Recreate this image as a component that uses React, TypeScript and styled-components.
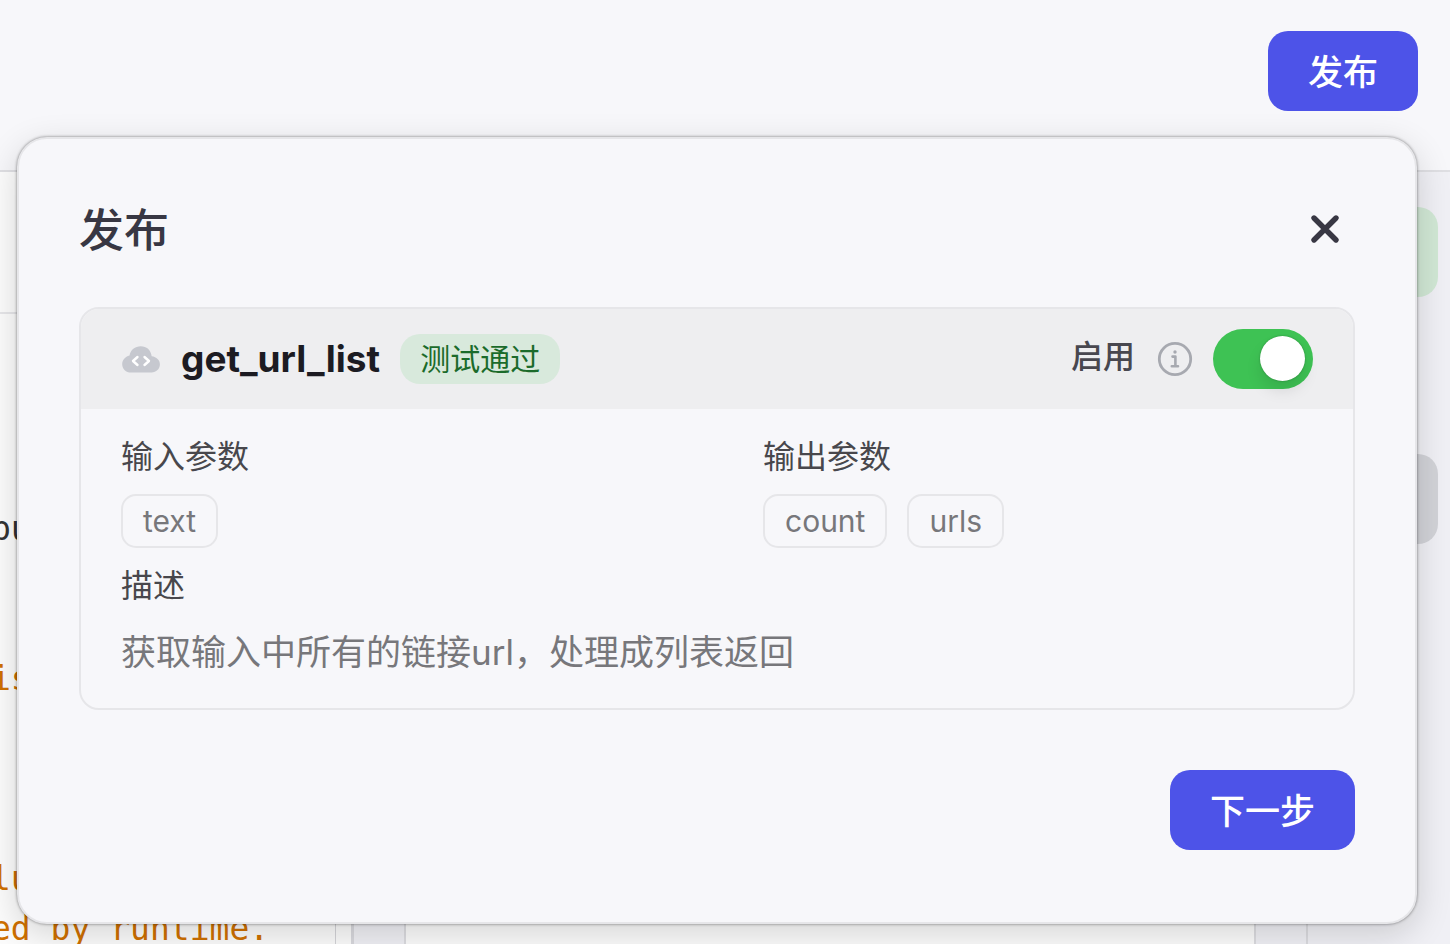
import React from "react";
import styled, { createGlobalStyle } from "styled-components";

const GlobalStyle = createGlobalStyle`
  *, *::before, *::after { box-sizing: border-box; }
  body {
    margin: 0;
    background: #f7f7fa;
    color: #1c1b22;
    font-family: Inter, "Noto Sans CJK SC", sans-serif;
  }
  h2, h3, h4, p, ul, pre { margin: 0; padding: 0; }
  button { font-family: inherit; }
`;

const Page = styled.div`
  position: relative;
  display: flex;
  flex-direction: column;
  height: 100vh;
  overflow: hidden;
`;

const TopBar = styled.header`
  display: flex;
  flex: none;
  justify-content: flex-end;
  align-items: flex-start;
  height: 172px;
  padding: 31px 32px;
  border-bottom: 2px solid #dfdfe3;
`;

const PrimaryButton = styled.button`
  height: 80px;
  padding: 2px 40px 0;
  border: 0;
  border-radius: 20px;
  background: #4d53e8;
  color: #fff;
  font-size: 35px;
  font-weight: 500;
  line-height: 50px;
  cursor: pointer;
`;

const Workspace = styled.main`
  display: flex;
  flex: 1;
  min-height: 0;
  background: #f0f0f5;
`;

const Editor = styled.section`
  flex: none;
  width: 336px;
  overflow: hidden;
  border-right: 1px solid #d4d4d8;
  background: #fcfcfc;
`;

const EditorHead = styled.div`
  height: 142px;
  border-bottom: 2px solid #e6e6e9;
`;

const CodeLines = styled.div`
  margin-left: -9px;
  padding-top: 40px;
`;

const CodeLine = styled.pre<{ $comment?: boolean }>`
  height: 50px;
  color: ${(p) => (p.$comment ? "#cf7000" : "#333")};
  font-family: "DejaVu Sans Mono", monospace;
  font-size: 33px;
  line-height: 50px;
`;

const EditorRail = styled.div`
  flex: none;
  width: 18px;
  border-right: 3px solid #d9d9de;
  background: #fcfcfc;
`;

const Canvas = styled.section`
  flex: 1;
  margin: 0 50px;
  border: solid #dcdce0;
  border-width: 0 2px;
  background: #fcfcfc;
`;

const SidePanel = styled.aside`
  display: flex;
  flex: none;
  flex-direction: column;
  gap: 157px;
  width: 144px;
  padding: 35px 12px;
  border-left: 2px solid #dcdce0;
`;

const StatusBlock = styled.div<{ $color: string }>`
  height: 90px;
  border-radius: 20px;
  background: ${(p) => p.$color};
`;

const Popover = styled.section`
  position: absolute;
  top: 137px;
  right: 33px;
  left: 17px;
  padding: 60px 60px 72px;
  border: 2px solid #e6e6e9;
  border-radius: 30px;
  background: #f7f7fa;
  box-shadow: 0 0 3px rgba(0, 0, 0, 0.5), 0 10px 35px rgba(0, 0, 0, 0.16);
`;

const PopoverHead = styled.div`
  display: flex;
  justify-content: space-between;
  align-items: center;
  height: 60px;
  margin-bottom: 48px;
`;

const Title = styled.h2`
  padding-top: 4px;
  color: #383743;
  font-size: 45px;
  font-weight: 500;
  line-height: 60px;
`;

const CloseButton = styled.button`
  display: flex;
  justify-content: center;
  align-items: center;
  width: 60px;
  height: 60px;
  padding: 0;
  border: 0;
  background: none;
  color: #383743;
  cursor: pointer;
`;

const Card = styled.article`
  overflow: hidden;
  border: 2px solid #e6e6e9;
  border-radius: 20px;
`;

const CardHead = styled.header`
  display: flex;
  justify-content: space-between;
  align-items: center;
  height: 100px;
  padding: 0 40px;
  background: #eeeef0;
`;

const HeadGroup = styled.div`
  display: flex;
  align-items: center;
  gap: 20px;
`;

const Name = styled.h3`
  font-size: 37px;
  font-weight: 700;
  line-height: 50px;
`;

const StatusTag = styled.span`
  padding: 0 20px;
  border-radius: 20px;
  background: #d8e9dc;
  color: #1b6b2b;
  font-size: 30px;
  line-height: 50px;
`;

const SwitchLabel = styled.label`
  padding: 0 2px 4px 0;
  color: #48474f;
  font-size: 32px;
  font-weight: 500;
  line-height: 50px;
`;

const Switch = styled.input`
  display: flex;
  align-items: center;
  justify-content: flex-start;
  appearance: none;
  width: 100px;
  height: 60px;
  margin: 0;
  padding: 0 8px 2px;
  border-radius: 30px;
  background: #c6c8cf;
  cursor: pointer;

  &::before {
    content: "";
    width: 45px;
    height: 45px;
    border-radius: 50%;
    background: #fff;
    box-shadow: 0 0 2px rgba(0, 0, 0, 0.3), 0 10px 15px rgba(0, 0, 0, 0.1);
  }

  &:checked {
    justify-content: flex-end;
    background: #3ec254;
  }
`;

const CardBody = styled.div`
  display: grid;
  grid-template-columns: 1fr 1fr;
  column-gap: 92px;
  row-gap: 15px;
  padding: 25px 40px 27px;
`;

const Field = styled.div<{ $wide?: boolean }>`
  grid-column: ${(p) => (p.$wide ? "1 / -1" : "auto")};
`;

const FieldLabel = styled.h4`
  margin-bottom: 14px;
  color: #48474c;
  font-size: 32px;
  font-weight: 400;
  line-height: 46px;
`;

const Chips = styled.ul`
  display: flex;
  gap: 20px;
  list-style: none;
`;

const Chip = styled.li`
  padding: 0 20px;
  border: 2px solid #e6e6e9;
  border-radius: 15px;
  color: #77777b;
  font-size: 30px;
  line-height: 50px;
`;

const Description = styled.p`
  padding: 4px 0;
  color: #77777b;
  font-size: 35px;
  line-height: 50px;
`;

const PopoverFoot = styled.footer`
  display: flex;
  justify-content: flex-end;
  margin-top: 60px;
`;

const CloseIcon = () => (
  <svg width="30" height="30" viewBox="0 0 30 30" fill="none" stroke="currentColor" strokeWidth="5.400" strokeLinecap="round" aria-hidden="true">
    <path d="M4 4 26 26M26 4 4 26" />
  </svg>
);

const CloudCodeIcon = () => (
  <svg width="40" height="40" viewBox="0 0 40 40" aria-hidden="true">
    <path
      d="M10 33.5C5 33.5 1.200 30 1.200 25.200C1.200 21 4.200 17.700 8.500 16.500C9.500 11 14 7.300 19.800 7.300C25.500 7.300 29.800 10.800 30.700 17.200C35.500 17.800 38.900 21 38.900 25.300C38.900 30 35.300 33.500 30.500 33.500Z"
      fill="#c6c8cf"
    />
    <path d="M16.500 18 12 22 16.500 26M23.500 18 28 22 23.500 26" fill="none" stroke="#fff" strokeWidth="2.400" strokeLinecap="round" strokeLinejoin="round" />
  </svg>
);

const InfoIcon = () => (
  <svg width="36" height="36" viewBox="0 0 36 36" fill="none" stroke="#a7a9b0" aria-hidden="true">
    <circle cx="18" cy="18" r="15.700" strokeWidth="2.800" />
    <path d="M15.500 15.600H18.400V25M14.800 25.200H21" strokeWidth="2.600" strokeLinecap="round" strokeLinejoin="round" />
    <circle cx="18" cy="11" r="1.700" fill="#a7a9b0" stroke="none" />
  </svg>
);

const codeLines = [
  { text: "" },
  { text: "" },
  { text: "" },
  { text: "pu" },
  { text: "" },
  { text: "" },
  { text: "is", comment: true },
  { text: "" },
  { text: "" },
  { text: "" },
  { text: "lu", comment: true },
  { text: "ed by runtime.", comment: true },
];

const ParamField = ({ label, params }: { label: string; params: string[] }) => (
  <Field>
    <FieldLabel>{label}</FieldLabel>
    <Chips>
      {params.map((name) => (
        <Chip key={name}>{name}</Chip>
      ))}
    </Chips>
  </Field>
);

export default function App() {
  return (
    <Page>
      <GlobalStyle />
      <TopBar>
        <PrimaryButton type="button">发布</PrimaryButton>
      </TopBar>
      <Workspace>
        <Editor>
          <EditorHead />
          <CodeLines>
            {codeLines.map((line, i) => (
              <CodeLine key={i} $comment={line.comment}>
                {line.text}
              </CodeLine>
            ))}
          </CodeLines>
        </Editor>
        <EditorRail />
        <Canvas />
        <SidePanel>
          <StatusBlock $color="#d1e8d5" />
          <StatusBlock $color="#d2d3d8" />
        </SidePanel>
      </Workspace>

      <Popover role="dialog" aria-labelledby="publish-title">
        <PopoverHead>
          <Title id="publish-title">发布</Title>
          <CloseButton type="button" aria-label="关闭">
            <CloseIcon />
          </CloseButton>
        </PopoverHead>
        <Card>
          <CardHead>
            <HeadGroup>
              <CloudCodeIcon />
              <Name>get_url_list</Name>
              <StatusTag>测试通过</StatusTag>
            </HeadGroup>
            <HeadGroup>
              <SwitchLabel htmlFor="enable-tool">启用</SwitchLabel>
              <InfoIcon />
              <Switch id="enable-tool" type="checkbox" defaultChecked />
            </HeadGroup>
          </CardHead>
          <CardBody>
            <ParamField label="输入参数" params={["text"]} />
            <ParamField label="输出参数" params={["count", "urls"]} />
            <Field $wide>
              <FieldLabel>描述</FieldLabel>
              <Description>获取输入中所有的链接url，处理成列表返回</Description>
            </Field>
          </CardBody>
        </Card>
        <PopoverFoot>
          <PrimaryButton type="button">下一步</PrimaryButton>
        </PopoverFoot>
      </Popover>
    </Page>
  );
}
